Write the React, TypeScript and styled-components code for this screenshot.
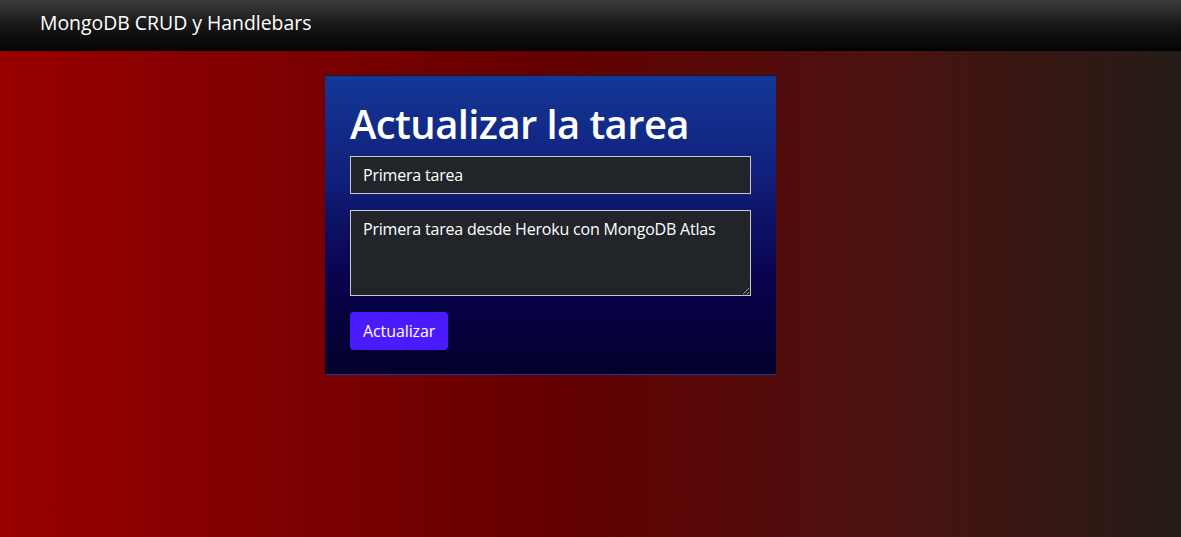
import styled, { createGlobalStyle } from 'styled-components'

const GlobalStyle = createGlobalStyle`
  * {
    box-sizing: border-box;
  }
  html, body {
    margin: 0;
    padding: 0;
  }
  body {
    font-family: 'Open Sans', 'Noto Sans', sans-serif;
    color: #fff;
    min-height: 537px;
    background: linear-gradient(to right, #990000 0%, #650000 46%, #4a1210 75%, #251c17 100%);
  }
`

const Navbar = styled.nav`
  height: 51px;
  display: flex;
  align-items: center;
  padding: 0 40px;
  background: linear-gradient(to bottom, #3b3b3b 0%, #141414 55%, #030303 100%);
`

const Brand = styled.span`
  font-size: 19.4px;
  line-height: 1;
  color: #fff;
  margin-top: -5px;
`

const Main = styled.main`
  padding: 24px 0 0 325px;
`

const Card = styled.form`
  width: 451px;
  padding: 24px 25px 24px;
  display: flex;
  flex-direction: column;
  border-top: 1px solid #101838;
  border-bottom: 1px solid #1a3aa0;
  background: linear-gradient(to bottom, #143796 0%, #101f7a 35%, #0a0450 65%, #04002c 100%);
`

const Title = styled.h1`
  margin: 0 0 8px;
  font-size: 40px;
  font-weight: 600;
  line-height: 48px;
  letter-spacing: -0.6px;
`

const fieldCss = `
  width: 100%;
  font-family: inherit;
  font-size: 16px;
  letter-spacing: -0.2px;
  color: #fff;
  background: #212529;
  border: 1px solid #c8c8c8;
  border-radius: 0;
  padding: 6px 12px;
  outline: none;
  margin-bottom: 16px;
`

const Input = styled.input`
  ${fieldCss}
  height: 38px;
`

const TextArea = styled.textarea`
  ${fieldCss}
  display: block;
  height: 86px;
  line-height: 1.5;
  resize: vertical;
`

const Button = styled.button`
  align-self: flex-start;
  height: 38px;
  padding: 0 13px;
  font-family: inherit;
  font-size: 16px;
  letter-spacing: -0.1px;
  color: #fff;
  background: #4a1bff;
  border: none;
  border-radius: 4px;
`

export default function App() {
  return (
    <>
      <GlobalStyle />
      <Navbar>
        <Brand>MongoDB CRUD y Handlebars</Brand>
      </Navbar>
      <Main>
        <Card onSubmit={(e) => e.preventDefault()}>
          <Title>Actualizar la tarea</Title>
          <Input defaultValue="Primera tarea" />
          <TextArea defaultValue="Primera tarea desde Heroku con MongoDB Atlas" />
          <Button type="submit">Actualizar</Button>
        </Card>
      </Main>
    </>
  )
}
